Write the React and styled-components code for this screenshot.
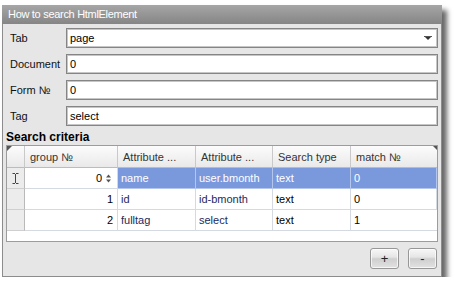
import React from 'react';
import styled, { createGlobalStyle } from 'styled-components';

const GlobalStyle = createGlobalStyle`
  html, body {
    margin: 0;
    background: #ffffff;
  }
  body {
    font-family: "Liberation Sans", Arial, sans-serif;
    font-size: 11px;
    color: #000;
  }
`;

const Window = styled.div`
  margin: 5px 0 0 2px;
  width: 440px;
  height: 272px;
  box-sizing: border-box;
  background: #e6e6e6;
  border: 1px solid #8c8c8c;
  border-top: none;
  box-shadow: 5px 5px 5px rgba(0, 0, 0, 0.6);
  display: flex;
  flex-direction: column;
`;

const TitleBar = styled.div`
  height: 19px;
  line-height: 19px;
  margin: 0 -1px;
  padding-left: 6px;
  color: #ffffff;
  background: linear-gradient(#a6a6a6, #858585);
  font-size: 11px;
  letter-spacing: -0.3px;
`;

const Form = styled.div`
  display: grid;
  grid-template-columns: 56px 1fr;
  row-gap: 6px;
  padding: 4px 3px 0 7px;
`;

const Label = styled.label`
  align-self: center;
  font-size: 11px;
  color: #111;
`;

const Field = styled.div`
  position: relative;
  height: 20px;
  box-sizing: border-box;
  display: flex;
  align-items: center;
  padding: 0 3px;
  background: #ffffff;
  border: 1px solid #858585;
  box-shadow: inset 0 0 0 1px #c6c6c6;
  font-size: 11px;
`;

const DropArrow = styled.span`
  position: absolute;
  right: 6px;
  top: 8px;
  width: 0;
  height: 0;
  border-left: 3px solid transparent;
  border-right: 3px solid transparent;
  border-top: 3px solid #333;
  &::before {
    content: '';
    position: absolute;
    left: -4px;
    top: -4px;
    width: 8px;
    height: 1px;
    background: #555;
  }
`;

const Section = styled.div`
  margin-top: 4px;
  height: 15px;
  line-height: 15px;
  padding-left: 3px;
  font-weight: bold;
  font-size: 12px;
`;

const Table = styled.div`
  margin-left: 3px;
  width: 432px;
  height: 97px;
  box-sizing: border-box;
  background: #ffffff;
  border: 1px solid #9c9c9c;
  display: grid;
  grid-template-columns: 18px 93px 78px 77px 78px 1fr;
  grid-template-rows: 22px repeat(3, 21px);
  align-content: start;
`;

const HeadCell = styled.div`
  position: relative;
  box-sizing: border-box;
  display: flex;
  align-items: center;
  padding-left: 5px;
  background: linear-gradient(#fcfcfc, #e9e9e9);
  border-right: 1px solid #c9c9c9;
  border-bottom: 1px solid #bcbcbc;
  color: #333;
  white-space: nowrap;
  overflow: hidden;
  ${p => p.$corner === 'left' && `
    &::before {
      content: '';
      position: absolute;
      left: 0;
      top: 0;
      border-top: 5px solid #555;
      border-right: 5px solid transparent;
    }
  `}
  ${p => p.$corner === 'right' && `
    border-right: none;
    &::before {
      content: '';
      position: absolute;
      right: 0;
      top: 0;
      border-top: 4px solid #555;
      border-left: 4px solid transparent;
    }
  `}
`;

const RowHead = styled.div`
  box-sizing: border-box;
  display: flex;
  align-items: center;
  justify-content: center;
  background: #ececec;
  border-right: 1px solid #b9b9b9;
  border-bottom: 1px solid #cfcfcf;
`;

const Cell = styled.div`
  box-sizing: border-box;
  display: flex;
  align-items: center;
  justify-content: ${p => (p.$right ? 'flex-end' : 'flex-start')};
  padding: ${p => (p.$right ? '0 4px 0 0' : '0 0 0 3px')};
  background: ${p => (p.$selected ? '#7a99dd' : '#ffffff')};
  color: ${p => (p.$selected ? '#ffffff' : p.$attr ? '#1e2a5c' : '#000')};
  border-right: 1px solid ${p => (p.$selected ? '#b4c5ee' : '#d4d9e2')};
  border-bottom: 1px solid ${p => (p.$selected ? '#b4c5ee' : '#d4d9e2')};
  white-space: nowrap;
  overflow: hidden;
  &:last-child {
    border-right: none;
  }
`;

const Editor = styled.div`
  box-sizing: border-box;
  display: flex;
  align-items: center;
  justify-content: flex-end;
  gap: 4px;
  padding-right: 6px;
  background: #ffffff;
  border-right: 1px solid #d4d9e2;
  border-bottom: 1px solid #d4d9e2;
`;

const Footer = styled.div`
  display: flex;
  justify-content: flex-end;
  gap: 9px;
  padding: 6px 4px 0 0;
`;

const Button = styled.button`
  width: 29px;
  height: 21px;
  padding: 0;
  box-sizing: border-box;
  border: 1px solid #979797;
  border-radius: 3px;
  background: linear-gradient(#f7f7f7 0%, #e6e6e6 42%, #cfcfcf 52%, #e2e2e2 100%);
  box-shadow: inset 0 0 0 1px rgba(255, 255, 255, 0.7);
  font-family: "Liberation Sans", Arial, sans-serif;
  font-size: 13px;
  line-height: 17px;
  color: #222;
`;

const IBeam = () => (
  <svg width="7" height="11" viewBox="0 0 7 11">
    <path d="M0.5 0.5h2.5M4 0.5h2.5M3.5 1v9M0.5 10.5h2.5M4 10.5h2.5" stroke="#444" strokeWidth="1" fill="none" />
  </svg>
);

const Spin = () => (
  <svg width="5" height="11" viewBox="0 0 5 11">
    <path d="M2.5 1.5L5 4.5H0z" fill="#555" />
    <path d="M2.5 9.5L5 6.5H0z" fill="#555" />
  </svg>
);

const fields = [
  { label: 'Document', value: '0' },
  { label: 'Form №', value: '0' },
  { label: 'Tag', value: 'select' },
];

const rows = [
  { group: '0', attr: 'name', value: 'user.bmonth', type: 'text', match: '0' },
  { group: '1', attr: 'id', value: 'id-bmonth', type: 'text', match: '0' },
  { group: '2', attr: 'fulltag', value: 'select', type: 'text', match: '1' },
];

export default function App() {
  return (
    <>
      <GlobalStyle />
      <Window>
        <TitleBar>How to search HtmlElement</TitleBar>
        <Form>
          <Label>Tab</Label>
          <Field>
            page
            <DropArrow />
          </Field>
          {fields.map(f => (
            <React.Fragment key={f.label}>
              <Label>{f.label}</Label>
              <Field>{f.value}</Field>
            </React.Fragment>
          ))}
        </Form>
        <Section>Search criteria</Section>
        <Table>
          <HeadCell $corner="left" />
          <HeadCell>group №</HeadCell>
          <HeadCell>Attribute ...</HeadCell>
          <HeadCell>Attribute ...</HeadCell>
          <HeadCell>Search type</HeadCell>
          <HeadCell $corner="right">match №</HeadCell>
          {rows.map((r, i) => {
            const sel = i === 0;
            return (
              <React.Fragment key={r.group}>
                <RowHead>{sel && <IBeam />}</RowHead>
                {sel ? (
                  <Editor>
                    {r.group}
                    <Spin />
                  </Editor>
                ) : (
                  <Cell $right>{r.group}</Cell>
                )}
                <Cell $selected={sel} $attr>{r.attr}</Cell>
                <Cell $selected={sel} $attr>{r.value}</Cell>
                <Cell $selected={sel}>{r.type}</Cell>
                <Cell $selected={sel}>{r.match}</Cell>
              </React.Fragment>
            );
          })}
        </Table>
        <Footer>
          <Button>+</Button>
          <Button>-</Button>
        </Footer>
      </Window>
    </>
  );
}
